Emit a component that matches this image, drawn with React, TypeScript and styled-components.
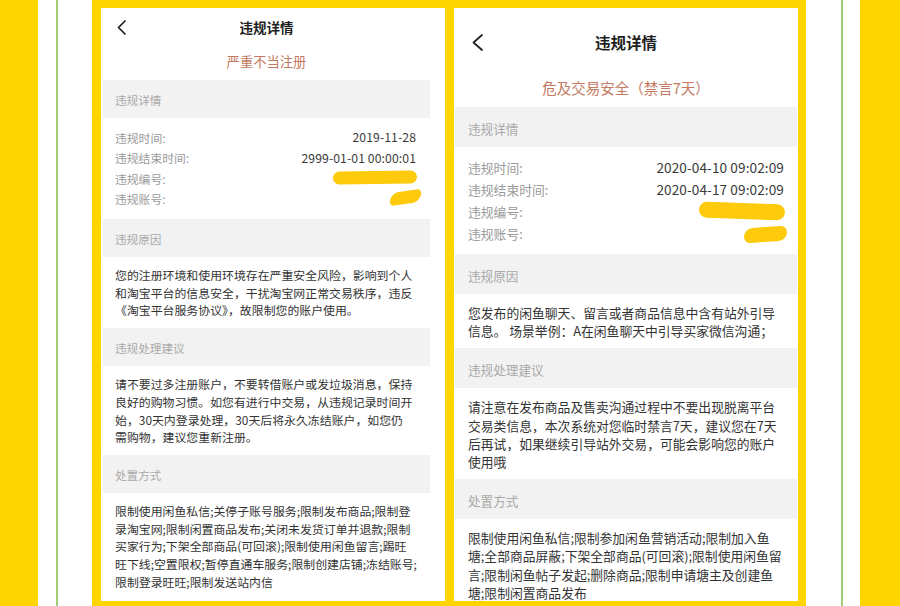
import React from "react";
import styled, { createGlobalStyle } from "styled-components";

type Sz = {
  cardPad: string;
  navH: number;
  titleFs: number;
  chevW: number;
  chevH: number;
  chevLeft: number;
  subH: number;
  subFs: number;
  subLH: number;
  subPadTop: number;
  bandH: number;
  bandFs: number;
  bandPadTop: number;
  padX: number;
  padR: number;
  infoPadTop: number;
  infoPadBot: number;
  rowH: number;
  labelFs: number;
  valueFs: number;
  paraFs: number;
  paraLH: number;
  paraPadTop: number;
  paraPadBot: number;
};

const GlobalStyle = createGlobalStyle`
  html, body { margin: 0; padding: 0; background: #ffffff; }
  body { font-family: "Noto Sans CJK SC", "Noto Sans", sans-serif; }
`;

const Page = styled.div`
  width: 900px;
  height: 606px;
  display: flex;
  overflow: hidden;
  background: #ffffff;
`;

const Stripe = styled.div<{ $w?: number; $color: string }>`
  flex: ${(p) => (p.$w ? `0 0 ${p.$w}px` : "1 1 auto")};
  background: ${(p) => p.$color};
`;

const Frame = styled.div`
  flex: 0 0 714px;
  box-sizing: border-box;
  background: #ffd500;
  padding: 8px 8px 5px 9px;
  display: flex;
  gap: 9px;
`;

const Card = styled.div<{ $sz: Sz }>`
  flex: 0 0 344px;
  box-sizing: border-box;
  background: #ffffff;
  padding: ${(p) => p.$sz.cardPad};
  overflow: hidden;
  display: flex;
  flex-direction: column;
`;

const NavBar = styled.div<{ $sz: Sz }>`
  height: ${(p) => p.$sz.navH}px;
  flex: 0 0 auto;
  display: grid;
  grid-template-columns: 1fr auto 1fr;
  align-items: center;
  padding-left: ${(p) => p.$sz.chevLeft}px;
`;

const Back = styled.svg`
  justify-self: start;
  display: block;
`;

const Title = styled.div<{ $sz: Sz }>`
  font-size: ${(p) => p.$sz.titleFs}px;
  font-weight: 700;
  color: #1e1e1e;
  line-height: 20px;
  transform: translateX(-${(p) => p.$sz.chevLeft / 2}px);
`;

const Subtitle = styled.div<{ $sz: Sz }>`
  height: ${(p) => p.$sz.subH}px;
  box-sizing: border-box;
  flex: 0 0 auto;
  padding-top: ${(p) => p.$sz.subPadTop}px;
  text-align: center;
  font-size: ${(p) => p.$sz.subFs}px;
  line-height: ${(p) => p.$sz.subLH}px;
  color: #c47a62;
`;

const Band = styled.div<{ $sz: Sz }>`
  height: ${(p) => p.$sz.bandH}px;
  flex: 0 0 auto;
  box-sizing: border-box;
  background: #f2f2f2;
  display: flex;
  align-items: center;
  padding: ${(p) => p.$sz.bandPadTop}px ${(p) => p.$sz.padX}px 0;
  font-size: ${(p) => p.$sz.bandFs}px;
  color: #a9a9a9;
`;

const InfoList = styled.div<{ $sz: Sz }>`
  flex: 0 0 auto;
  padding: ${(p) => p.$sz.infoPadTop}px ${(p) => p.$sz.padR}px
    ${(p) => p.$sz.infoPadBot}px ${(p) => p.$sz.padX}px;
`;

const InfoRow = styled.div<{ $sz: Sz }>`
  height: ${(p) => p.$sz.rowH}px;
  display: flex;
  align-items: center;
  justify-content: space-between;
`;

const Label = styled.span<{ $sz: Sz }>`
  font-size: ${(p) => p.$sz.labelFs}px;
  color: #9a9a9a;
`;

const Value = styled.span<{ $sz: Sz }>`
  font-size: ${(p) => p.$sz.valueFs}px;
  color: #3a3a3a;
  letter-spacing: 0.1px;
`;

const Scribble = styled.span<{
  $w: number;
  $h: number;
  $rot: number;
  $skew: number;
  $mr: number;
  $dy: number;
}>`
  display: block;
  width: ${(p) => p.$w}px;
  height: ${(p) => p.$h}px;
  margin-right: ${(p) => p.$mr}px;
  background: #fdcb0c;
  border-radius: ${(p) => p.$h / 2}px;
  transform: translateY(${(p) => p.$dy}px) rotate(${(p) => p.$rot}deg)
    skewX(${(p) => p.$skew}deg);
`;

const Para = styled.div<{ $sz: Sz }>`
  flex: 0 0 auto;
  padding: ${(p) => p.$sz.paraPadTop}px ${(p) => p.$sz.padR}px
    ${(p) => p.$sz.paraPadBot}px ${(p) => p.$sz.padX}px;
  font-size: ${(p) => p.$sz.paraFs}px;
  line-height: ${(p) => p.$sz.paraLH}px;
  color: #333333;
`;

const Line = styled.span`
  display: block;
  white-space: nowrap;
`;

type Blob = { w: number; h: number; rot: number; skew: number; mr: number; dy: number };
type Row = { label: string; value?: string; blob?: Blob };
type Phone = {
  sz: Sz;
  subtitle: string;
  rows: Row[];
  reason: string[];
  advice: string[];
  measures: string[];
};

const leftSz: Sz = {
  cardPad: "0 15px 0 2px",
  navH: 38,
  titleFs: 13.5,
  chevW: 9,
  chevH: 15,
  chevLeft: 14,
  subH: 34,
  subFs: 13.3,
  subLH: 20,
  subPadTop: 6,
  bandH: 38,
  bandFs: 11.6,
  bandPadTop: 2,
  padX: 12,
  padR: 14,
  infoPadTop: 9,
  infoPadBot: 10,
  rowH: 20.5,
  labelFs: 11.8,
  valueFs: 12.2,
  paraFs: 11.9,
  paraLH: 17.7,
  paraPadTop: 9,
  paraPadBot: 9,
};

const rightSz: Sz = {
  cardPad: "0 1px",
  navH: 68,
  titleFs: 15.5,
  chevW: 11,
  chevH: 17,
  chevLeft: 17,
  subH: 31,
  subFs: 14.5,
  subLH: 20,
  subPadTop: 2,
  bandH: 40,
  bandFs: 12.6,
  bandPadTop: 3,
  padX: 13,
  padR: 13,
  infoPadTop: 9,
  infoPadBot: 10,
  rowH: 22,
  labelFs: 12.8,
  valueFs: 13.6,
  paraFs: 12.8,
  paraLH: 18.2,
  paraPadTop: 10,
  paraPadBot: 8,
};

const phones: Phone[] = [
  {
    sz: leftSz,
    subtitle: "严重不当注册",
    rows: [
      { label: "违规时间:", value: "2019-11-28" },
      { label: "违规结束时间:", value: "2999-01-01 00:00:01" },
      { label: "违规编号:", blob: { w: 84, h: 13, rot: -1, skew: 0, mr: -1, dy: -1 } },
      { label: "违规账号:", blob: { w: 31, h: 13, rot: -8, skew: -25, mr: -5, dy: -1 } },
    ],
    reason: [
      "您的注册环境和使用环境存在严重安全风险，影响到个人",
      "和淘宝平台的信息安全，干扰淘宝网正常交易秩序，违反",
      "《淘宝平台服务协议》，故限制您的账户使用。",
    ],
    advice: [
      "请不要过多注册账户，不要转借账户或发垃圾消息，保持",
      "良好的购物习惯。如您有进行中交易，从违规记录时间开",
      "始，30天内登录处理，30天后将永久冻结账户，如您仍",
      "需购物，建议您重新注册。",
    ],
    measures: [
      "限制使用闲鱼私信;关停子账号服务;限制发布商品;限制登",
      "录淘宝网;限制闲置商品发布;关闭未发货订单并退款;限制",
      "买家行为;下架全部商品(可回滚);限制使用闲鱼留言;踢旺",
      "旺下线;空置限权;暂停直通车服务;限制创建店铺;冻结账号;",
      "限制登录旺旺;限制发送站内信",
    ],
  },
  {
    sz: rightSz,
    subtitle: "危及交易安全（禁言7天）",
    rows: [
      { label: "违规时间:", value: "2020-04-10 09:02:09" },
      { label: "违规结束时间:", value: "2020-04-17 09:02:09" },
      { label: "违规编号:", blob: { w: 86, h: 16, rot: 2, skew: 0, mr: -1, dy: 0 } },
      { label: "违规账号:", blob: { w: 43, h: 15, rot: -4, skew: -10, mr: -3, dy: 1 } },
    ],
    reason: [
      "您发布的闲鱼聊天、留言或者商品信息中含有站外引导",
      "信息。 场景举例：A在闲鱼聊天中引导买家微信沟通；",
    ],
    advice: [
      "请注意在发布商品及售卖沟通过程中不要出现脱离平台",
      "交易类信息，本次系统对您临时禁言7天，建议您在7天",
      "后再试，如果继续引导站外交易，可能会影响您的账户",
      "使用哦",
    ],
    measures: [
      "限制使用闲鱼私信;限制参加闲鱼营销活动;限制加入鱼",
      "塘;全部商品屏蔽;下架全部商品(可回滚);限制使用闲鱼留",
      "言;限制闲鱼帖子发起;删除商品;限制申请塘主及创建鱼",
      "塘;限制闲置商品发布",
    ],
  },
];

const PhoneCard: React.FC<{ phone: Phone }> = ({ phone }) => {
  const { sz } = phone;
  return (
    <Card $sz={sz}>
      <NavBar $sz={sz}>
        <Back
          width={sz.chevW}
          height={sz.chevH}
          viewBox={`0 0 ${sz.chevW} ${sz.chevH}`}
        >
          <polyline
            points={`${sz.chevW - 1},1 1.5,${sz.chevH / 2} ${sz.chevW - 1},${sz.chevH - 1}`}
            fill="none"
            stroke="#1e1e1e"
            strokeWidth={1.7}
            strokeLinecap="round"
            strokeLinejoin="round"
          />
        </Back>
        <Title $sz={sz}>违规详情</Title>
        <span />
      </NavBar>
      <Subtitle $sz={sz}>{phone.subtitle}</Subtitle>
      <Band $sz={sz}>违规详情</Band>
      <InfoList $sz={sz}>
        {phone.rows.map((r) => (
          <InfoRow $sz={sz} key={r.label}>
            <Label $sz={sz}>{r.label}</Label>
            {r.value ? (
              <Value $sz={sz}>{r.value}</Value>
            ) : r.blob ? (
              <Scribble
                $w={r.blob.w}
                $h={r.blob.h}
                $rot={r.blob.rot}
                $skew={r.blob.skew}
                $mr={r.blob.mr}
                $dy={r.blob.dy}
              />
            ) : null}
          </InfoRow>
        ))}
      </InfoList>
      <Band $sz={sz}>违规原因</Band>
      <Para $sz={sz}>
        {phone.reason.map((l) => (
          <Line key={l}>{l}</Line>
        ))}
      </Para>
      <Band $sz={sz}>违规处理建议</Band>
      <Para $sz={sz}>
        {phone.advice.map((l) => (
          <Line key={l}>{l}</Line>
        ))}
      </Para>
      <Band $sz={sz}>处置方式</Band>
      <Para $sz={sz}>
        {phone.measures.map((l) => (
          <Line key={l}>{l}</Line>
        ))}
      </Para>
    </Card>
  );
};

export default function App() {
  return (
    <>
      <GlobalStyle />
      <Page>
        <Stripe $w={38} $color="#ffd500" />
        <Stripe $w={18} $color="#ffffff" />
        <Stripe $w={2} $color="#9fcd74" />
        <Stripe $w={34} $color="#ffffff" />
        <Frame>
          {phones.map((p) => (
            <PhoneCard key={p.subtitle} phone={p} />
          ))}
        </Frame>
        <Stripe $w={35} $color="#ffffff" />
        <Stripe $w={2} $color="#9fcd74" />
        <Stripe $w={17} $color="#ffffff" />
        <Stripe $color="#ffd500" />
      </Page>
    </>
  );
}
